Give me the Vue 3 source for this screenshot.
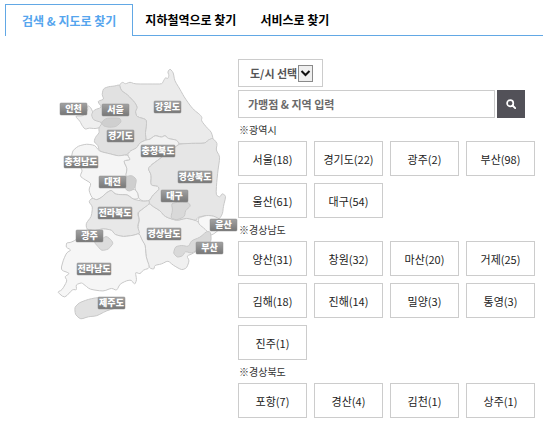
<script setup>
import { ref } from 'vue'

const tabs = ['검색 & 지도로 찾기', '지하철역으로 찾기', '서비스로 찾기']
const active = ref(0)
const keyword = ref('')

const groups = [
  { name: '광역시', items: [['서울', 18], ['경기도', 22], ['광주', 2], ['부산', 98], ['울산', 61], ['대구', 54]] },
  { name: '경상남도', items: [['양산', 31], ['창원', 32], ['마산', 20], ['거제', 25], ['김해', 18], ['진해', 14], ['밀양', 3], ['통영', 3], ['진주', 1]] },
  { name: '경상북도', items: [['포항', 7], ['경산', 4], ['김천', 1], ['상주', 1]] }
]

// Province outlines, in thirds of a map unit.
const regions = [
  { fill: '#ebebeb', pts: '238,74 248,66 256,72 270,66 285,72 340,72 366,72 372,60 376,53 384,56 387,46 383,36 390,26 400,38 404,62 420,88 432,110 450,136 462,150 480,164 486,172 484,182 498,200 514,216 520,238 505,240 495,250 455,250 418,252 410,240 385,236 375,226 365,232 345,226 330,238 318,240 316,218 320,190 318,178 290,170 286,155 292,142 285,128 262,104 244,92' },
  { fill: '#efefef', pts: '105,168 130,168 144,150 142,136 152,142 160,160 164,178 184,184 184,202 165,206 148,204 135,208 126,196 120,184' },
  { fill: '#e1e1e1', pts: '238,74 244,92 262,104 285,128 292,142 286,155 290,170 318,178 320,190 316,218 318,240 300,248 290,264 272,272 262,284 235,288 212,282 178,274 174,256 162,246 166,232 178,218 176,204 188,188 160,180 154,164 162,150 186,142 172,124 192,118 186,104 190,86 205,80 225,78' },
  { fill: '#cfcfcf', pts: '184,186 200,174 240,174 244,186 228,200 208,202 190,198' },
  { fill: '#f5f5f5', pts: '98,272 115,258 140,252 165,256 178,274 212,282 235,288 262,284 272,300 250,302 262,326 258,345 264,388 285,388 294,400 296,416 280,418 262,404 240,404 225,402 214,390 200,398 185,412 170,420 156,414 146,390 154,370 130,356 120,348 128,330 110,310 94,295' },
  { fill: '#f2f2f2', pts: '262,284 272,272 290,264 300,248 318,240 330,238 345,226 365,232 375,226 385,236 410,240 418,252 405,262 380,280 360,296 335,314 324,326 334,345 332,376 354,378 358,388 340,404 328,422 310,424 296,416 294,400 285,388 285,358 256,350 262,326 250,302 272,300' },
  { fill: '#cfcfcf', pts: '256,350 276,346 290,358 284,386 268,394 256,388' },
  { fill: '#f0f0f0', pts: '328,430 340,440 360,452 375,470 410,482 440,474 470,482 490,500 512,510 512,530 492,556 460,580 440,588 448,602 440,624 425,630 400,616 384,602 365,612 344,616 342,628 328,624 318,590 316,556 306,540 296,520 294,500 298,480 294,458 310,445' },
  { fill: '#e6e6e6', pts: '418,252 455,250 495,250 505,240 518,234 532,250 528,270 540,290 534,330 530,368 528,405 540,412 546,400 558,408 550,440 548,460 538,478 520,468 500,466 472,472 470,482 440,474 410,482 375,470 360,452 340,440 328,430 328,422 340,404 358,388 354,378 332,376 334,345 324,326 335,314 360,296 380,280 405,262' },
  { fill: '#d9d9d9', pts: '394,430 420,426 446,428 452,438 436,452 434,470 410,480 392,474 398,450' },
  { fill: '#e8e8e8', pts: '156,414 170,420 185,412 200,398 214,390 225,402 240,404 262,404 280,418 310,424 328,422 328,432 310,445 292,458 298,480 292,500 300,520 280,526 250,530 225,524 215,510 190,506 165,512 140,508 138,490 154,470 158,440 146,425' },
  { fill: '#f6f6f6', pts: '90,548 108,540 140,508 165,512 190,506 215,510 225,524 250,530 280,526 298,520 306,540 316,556 318,590 330,624 310,630 300,642 286,636 290,660 284,674 274,660 260,662 240,672 230,692 215,684 190,694 150,688 135,676 125,668 108,674 110,690 98,688 74,714 52,696 66,690 82,662 74,650 90,640 62,630 70,600 80,578 94,570 78,562 80,548' },
  { fill: '#dcdcdc', pts: '162,546 180,542 198,528 212,538 220,550 205,568 185,572 174,560' },
  { fill: '#f7f7f7', pts: '474,474 500,466 520,468 538,476 548,500 524,520 512,526 496,508 476,492' },
  { fill: '#d9d9d9', pts: '512,516 514,545 490,556 470,570 455,580 436,574 428,588 412,592 400,580 406,560 425,556 446,560 454,542 480,532 500,514' },
  { fill: '#e1e1e1', pts: '104,742 118,728 145,718 175,712 230,716 250,728 235,742 200,752 170,768 145,770 122,778 106,764' }
]

// Rounds each corner of the outline over the nearest third of its two edges.
function outline(text) {
  const p = text.split(' ').map(s => s.split(',').map(Number))
  const toward = (a, b) => `${a[0] + (b[0] - a[0]) * 0.3} ${a[1] + (b[1] - a[1]) * 0.3}`
  return p.map((q, i) => {
    const before = p[(i + p.length - 1) % p.length]
    const after = p[(i + 1) % p.length]
    return `${i ? 'L' : 'M'}${toward(q, before)}Q${q[0]} ${q[1]} ${toward(q, after)}`
  }).join('') + 'Z'
}

const labels = [
  ['인천', 20, 43, 27], ['서울', 62, 44, 27], ['강원도', 114, 41, 27], ['경기도', 67, 70, 27],
  ['충청북도', 101, 85, 34], ['충청남도', 24, 96, 34], ['대전', 59, 116, 27], ['경상북도', 138, 111, 34],
  ['대구', 121, 130, 27], ['전라북도', 58, 147, 34], ['울산', 170, 159, 27], ['경상남도', 107, 168, 34],
  ['광주', 36, 170, 27], ['부산', 156, 182, 27], ['전라남도', 37, 203, 34], ['제주도', 58, 237, 27]
]
</script>

<template>
  <div class="page">
    <nav class="tabs">
      <a v-for="(t, i) in tabs" :key="t" href="#" class="tab" :class="{ active: i === active }" @click.prevent="active = i">{{ t }}</a>
    </nav>
    <main class="content">
      <svg class="map" viewBox="0 0 200 265" role="group" aria-label="지도">
        <defs>
          <linearGradient id="plate" x1="0" y1="0" x2="0" y2="1">
            <stop offset="0" stop-color="#a2a2a2" />
            <stop offset="1" stop-color="#777777" />
          </linearGradient>
        </defs>
        <g transform="scale(0.33333)" stroke="#c8c8c8" stroke-width="3" stroke-linejoin="round">
          <path v-for="(r, i) in regions" :key="i" :d="outline(r.pts)" :fill="r.fill" />
        </g>
        <a v-for="[name, x, y, w] in labels" :key="name" href="#" @click.prevent>
          <rect :x="x" :y="y" :width="w" height="12" rx="1" fill="url(#plate)" stroke="#8c8c8c" stroke-width="0.5" />
          <text class="plate-text" :x="x + w / 2" :y="y + 9" text-anchor="middle">{{ name }}</text>
        </a>
      </svg>

      <section class="finder">
        <div class="select-box">
          <select aria-label="도/시 선택">
            <option>도/시 선택</option>
            <option v-for="g in groups" :key="g.name">{{ g.name }}</option>
          </select>
          <svg class="arrow" viewBox="0 0 15 17" aria-hidden="true">
            <rect x="0.5" y="0.5" width="14" height="16" fill="#efefef" stroke="#8a8a8a" />
            <path d="M3.5 6l4 4 4-4" fill="none" stroke="#111" stroke-width="2" />
          </svg>
        </div>
        <form class="search" @submit.prevent>
          <input v-model="keyword" type="text" placeholder="가맹점 &amp; 지역 입력" aria-label="가맹점 &amp; 지역 입력">
          <button type="submit" aria-label="검색">
            <svg viewBox="0 0 10 10" aria-hidden="true">
              <circle cx="4.2" cy="4.2" r="3.1" fill="none" stroke="#fff" stroke-width="1.7" />
              <path d="M6.5 6.5L9.2 9.2" stroke="#fff" stroke-width="1.9" stroke-linecap="round" />
            </svg>
          </button>
        </form>
        <div v-for="g in groups" :key="g.name" class="group">
          <h2>※{{ g.name }}</h2>
          <div class="cells">
            <button v-for="[n, c] in g.items" :key="n" type="button">{{ n }}({{ c }})</button>
          </div>
        </div>
      </section>
    </main>
  </div>
</template>

<style>
body {
  background: #fff;
}
</style>

<style scoped>
.page,
.page button,
.page input,
.page select {
  font-family: "Noto Sans CJK KR", "Noto Sans", sans-serif;
}

.page {
  padding: 4px 7px 0 5px;
}

.tabs {
  display: flex;
}

.tabs::after {
  content: "";
  flex: 1;
  border-bottom: 1px solid #62a8e5;
}

.tab {
  box-sizing: border-box;
  height: 32px;
  padding: 0 12px;
  border-bottom: 1px solid #62a8e5;
  color: #000;
  font-size: 12px;
  font-weight: 700;
  line-height: 31px;
  text-decoration: none;
  white-space: nowrap;
}

.tab.active {
  padding: 0 16px;
  border: 1px solid #62a8e5;
  border-bottom: 0;
  color: #55a5ee;
}

.content {
  display: grid;
  grid-template-columns: 233px minmax(0, 1fr);
  align-items: start;
  padding: 23px 8px 0 0;
}

.map {
  width: 200px;
  margin: 1px 0 0 35px;
}

.plate-text {
  fill: #fff;
  font-size: 9px;
  font-weight: 900;
}

.select-box {
  display: inline-grid;
  grid-template-columns: 1fr 15px;
  align-items: center;
  box-sizing: border-box;
  width: 85px;
  height: 28px;
  padding-right: 9px;
  border: 1px solid #ccc;
}

.select-box select {
  grid-area: 1 / 1 / 2 / 3;
  height: 26px;
  padding: 0 0 0 11px;
  border: 0;
  background: none;
  appearance: none;
  color: #555;
  font-size: 11px;
  font-weight: 700;
}

.arrow {
  grid-area: 1 / 2;
  width: 15px;
  height: 17px;
  pointer-events: none;
}

.finder {
  display: flex;
  flex-direction: column;
  align-items: stretch;
}

.search {
  display: flex;
  gap: 2px;
  margin: 3px 10px 0 0;
}

.search input {
  flex: 1;
  min-width: 0;
  box-sizing: border-box;
  height: 28px;
  padding: 0 9px;
  border: 1px solid #ccc;
  color: #555;
  font-size: 11px;
  font-weight: 700;
}

.search input::placeholder {
  color: #6a6a6a;
  opacity: 1;
}

.search button {
  display: grid;
  place-items: center;
  width: 28px;
  height: 28px;
  padding: 0;
  border: 0;
  background: #525158;
}

.search svg {
  width: 10px;
  height: 10px;
}

.group h2 {
  margin: 0;
  padding-left: 1px;
  color: #333;
  font-size: 10px;
  font-weight: 400;
  line-height: 23px;
}

.cells {
  display: grid;
  grid-template-columns: repeat(4, minmax(0, 1fr));
  gap: 7px;
}

.cells button {
  height: 35px;
  padding: 0;
  border: 1px solid #ccc;
  background: #fff;
  color: #222;
  font-size: 11px;
}
</style>
